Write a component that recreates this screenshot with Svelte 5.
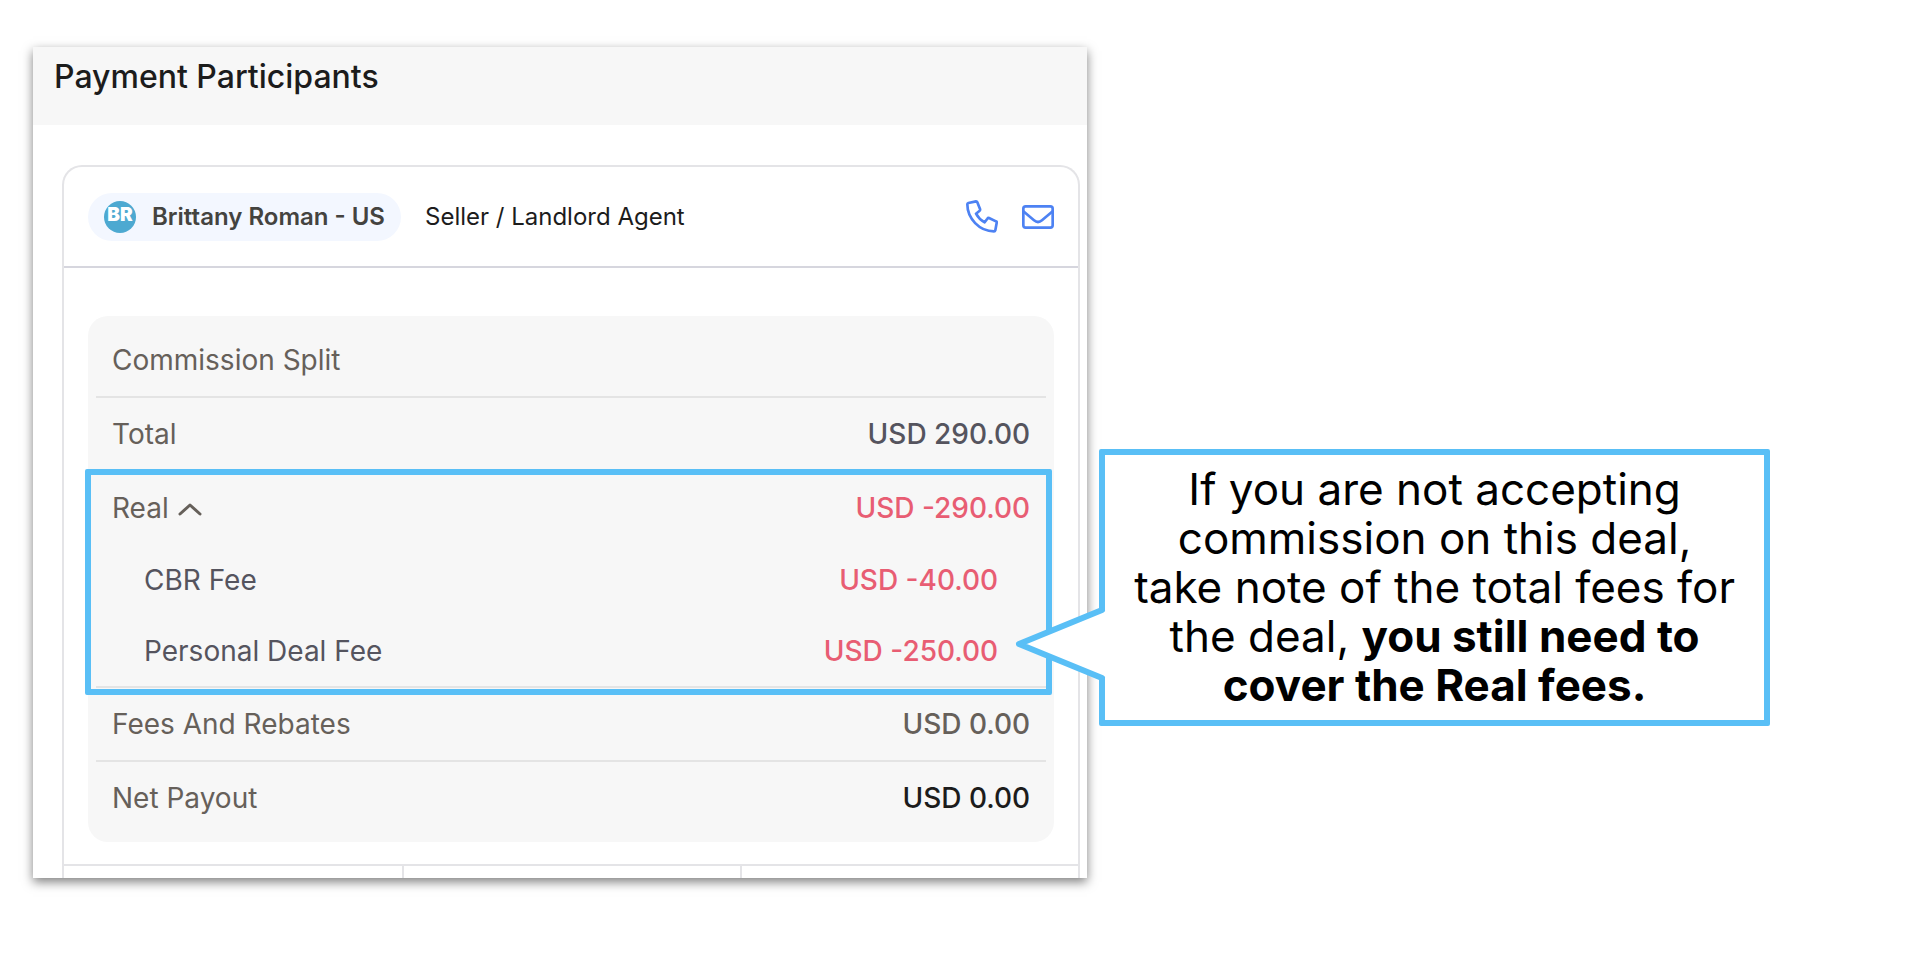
<script>
    let showFees = true;

    const realFees = [
        { name: 'CBR Fee', amount: 'USD -40.00' },
        { name: 'Personal Deal Fee', amount: 'USD -250.00' }
    ];

    function toggleFees() {
        showFees = !showFees;
    }
</script>

<main class="page">
    <!-- Payment Participants panel -->
    <section class="panel">
        <header class="panel-header">
            <h1>Payment Participants</h1>
        </header>

        <article class="participant">
            <div class="participant-head">
                <div class="chip">
                    <span class="avatar">BR</span>
                    <strong>Brittany Roman - US</strong>
                </div>
                <span class="role">Seller / Landlord Agent</span>
                <div class="contact">
                    <button type="button" aria-label="Call">
                        <svg width="32" height="34" viewBox="0 0 96 102">
                            <path d="M7 9 L30 4 Q33 4 34 7 L42 27 Q43 30 41 32 L30 41 Q39 58 56 67 L64 56 Q66 53 69 54 L90 64 Q93 65 92 69 L88 91 Q87 94 84 94 C40 94 4 55 4 13 Q4 10 7 9 Z"/>
                        </svg>
                    </button>
                    <button type="button" aria-label="Email">
                        <svg width="32" height="24" viewBox="0 0 96 72">
                            <rect x="4" y="4" width="88" height="64" rx="7"/>
                            <path d="M4 19 L36 46 Q48 56 60 46 L92 19"/>
                        </svg>
                    </button>
                </div>
            </div>

            <div class="participant-body">
                <table>
                    <tbody>
                        <tr class="line">
                            <th colspan="2" scope="colgroup">Commission Split</th>
                        </tr>
                        <tr class="line">
                            <th scope="row">Total</th>
                            <td class="slate">USD 290.00</td>
                        </tr>
                    </tbody>
                    <tbody class="highlight">
                        <tr>
                            <th scope="row">
                                <button type="button" class="toggle" aria-expanded={showFees} on:click={toggleFees}>
                                    Real
                                    <svg class:closed={!showFees} width="22" height="14" viewBox="0 0 22 14">
                                        <path d="M1 13 L11 4 L21 13"/>
                                    </svg>
                                </button>
                            </th>
                            <td class="negative">USD -290.00</td>
                        </tr>
                        {#if showFees}
                            {#each realFees as fee}
                                <tr class="fee">
                                    <th scope="row">{fee.name}</th>
                                    <td class="negative">{fee.amount}</td>
                                </tr>
                            {/each}
                        {/if}
                    </tbody>
                    <tbody>
                        <tr class="line">
                            <th scope="row">Fees And Rebates</th>
                            <td>USD 0.00</td>
                        </tr>
                        <tr>
                            <th scope="row">Net Payout</th>
                            <td class="net">USD 0.00</td>
                        </tr>
                    </tbody>
                </table>
            </div>

            <div class="cells">
                <span></span>
                <span></span>
                <span></span>
            </div>
        </article>
    </section>

    <!-- Note that points at the Real fees -->
    <aside class="callout">
        <svg class="tail" width="95" height="76" viewBox="0 0 95 76">
            <path class="fill" d="M95 4 L89 4 L6 38 L89 72 L95 72 Z"/>
            <path d="M89 4 L6 38 L89 72"/>
        </svg>
        <p>
            If you are not accepting<br>
            commission on this deal,<br>
            take note of the total fees for<br>
            the deal, <strong>you still need to<br>
            cover the Real fees.</strong>
        </p>
    </aside>
</main>

<style>
:global(body) {
    background: #ffffff;
}

.page {
    display: grid;
    grid-template-columns: minmax(0, 11fr) minmax(0, 7fr);
    column-gap: 12px;
    align-items: start;
    padding: 47px 152px 64px 33px;
    font-family: Inter, "Liberation Sans", sans-serif;
}

button {
    padding: 0;
    border: none;
    background: none;
    font: inherit;
    color: inherit;
    cursor: pointer;
}

svg {
    display: block;
    fill: none;
}

.panel {
    background: #ffffff;
    box-shadow: 0 4px 10px rgba(0, 0, 0, 0.5);
}

.panel-header {
    padding: 10px 21px 28px;
    background: #f7f7f7;
}

h1 {
    margin: 0;
    font-size: 32px;
    line-height: 40px;
    font-weight: 500;
    color: #1c1c1c;
}

.participant {
    margin: 40px 7px 0 29px;
    border: 2px solid #e4e4e7;
    border-bottom: none;
    border-radius: 20px 20px 0 0;
}

.participant-head {
    display: flex;
    align-items: center;
    gap: 24px;
    height: 99px;
    padding: 0 24px;
    border-bottom: 2px solid #d6d6de;
    font-size: 24px;
    line-height: 28px;
}

.chip {
    display: flex;
    align-items: center;
    gap: 16px;
    height: 48px;
    padding: 0 16px;
    border-radius: 24px;
    background: #f3f7ff;
    color: #44433f;
}

.chip strong {
    font-weight: 600;
}

.avatar {
    width: 32px;
    height: 32px;
    border-radius: 50%;
    background: #4da9d1;
    color: #ffffff;
    font-size: 19px;
    line-height: 28px;
    font-weight: 900;
    text-align: center;
}

.role {
    color: #1c1c1c;
}

.contact {
    display: flex;
    align-items: center;
    gap: 24px;
    margin-left: auto;
}

.contact svg {
    stroke: #4d82f3;
    stroke-width: 8;
    stroke-linejoin: round;
}

.participant-body {
    padding: 48px 24px 22px;
}

table {
    width: 100%;
    padding: 8px;
    border-collapse: separate;
    border-spacing: 0;
    border-radius: 20px;
    background: #f7f7f7;
    font-size: 28px;
    line-height: 32px;
    color: #66605a;
}

th, td {
    height: 72px;
    padding: 0 16px;
    font-weight: 400;
    text-align: left;
}

td {
    font-weight: 500;
    text-align: right;
}

.line th, .line td {
    border-bottom: 2px solid #e4e4e4;
}

.fee th, .fee td {
    height: 71px;
    padding: 0 48px;
    color: #55545e;
}

.highlight tr:last-child th, .highlight tr:last-child td {
    border-bottom: 2px solid #e4e4e4;
}

.slate {
    color: #55545e;
}

.highlight td.negative {
    color: #e85d73;
}

.net {
    color: #1c1c1c;
}

.toggle {
    display: flex;
    align-items: center;
    gap: 10px;
}

.toggle svg {
    stroke: #66605a;
    stroke-width: 3;
    stroke-linecap: round;
    stroke-linejoin: round;
    overflow: visible;
}

.toggle svg.closed {
    transform: rotate(180deg);
}

/* blue frame round the Real rows */
.highlight {
    position: relative;
}

.highlight::after {
    content: "";
    position: absolute;
    top: -3px;
    right: -6px;
    bottom: -7px;
    left: -11px;
    border: 6px solid #59bff6;
    border-radius: 2px;
    pointer-events: none;
}

.cells {
    display: grid;
    grid-template-columns: repeat(3, 1fr);
    height: 12px;
    border-top: 2px solid #e4e4e7;
}

.cells span + span {
    border-left: 2px solid #e4e4e7;
}

.callout {
    position: relative;
    margin-top: 402px;
    padding: 10px 0;
    border: 6px solid #59bff6;
    border-radius: 2px;
    background: #ffffff;
    text-align: center;
}

.callout p {
    margin: 0;
    font-size: 44px;
    line-height: 49px;
    color: #000000;
}

.callout strong {
    font-weight: 700;
}

.tail {
    position: absolute;
    right: 100%;
    bottom: 38px;
    margin-right: -3px;
    stroke: #59bff6;
    stroke-width: 6;
    stroke-linejoin: round;
    stroke-linecap: round;
}

.tail .fill {
    fill: #ffffff;
    stroke: none;
}
</style>
